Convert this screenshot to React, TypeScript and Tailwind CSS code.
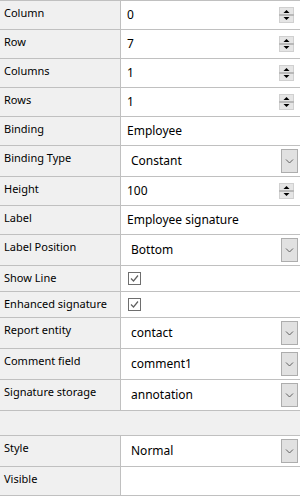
import React from 'react';

type Kind = 'spin' | 'text' | 'combo' | 'check' | 'none' | 'blank';

interface Prop {
  label: string;
  value?: string;
  kind: Kind;
  h: string;
}

const rows: Prop[] = [
  { label: 'Column', value: '0', kind: 'spin', h: 'h-[29px]' },
  { label: 'Row', value: '7', kind: 'spin', h: 'h-[29px]' },
  { label: 'Columns', value: '1', kind: 'spin', h: 'h-[29px]' },
  { label: 'Rows', value: '1', kind: 'spin', h: 'h-[29px]' },
  { label: 'Binding', value: 'Employee', kind: 'text', h: 'h-[29px]' },
  { label: 'Binding Type', value: 'Constant', kind: 'combo', h: 'h-[31px]' },
  { label: 'Height', value: '100', kind: 'spin', h: 'h-[29px]' },
  { label: 'Label', value: 'Employee signature', kind: 'text', h: 'h-[29px]' },
  { label: 'Label Position', value: 'Bottom', kind: 'combo', h: 'h-[31px]' },
  { label: 'Show Line', kind: 'check', h: 'h-[26px]' },
  { label: 'Enhanced signature', kind: 'check', h: 'h-[26px]' },
  { label: 'Report entity', value: 'contact', kind: 'combo', h: 'h-[31px]' },
  { label: 'Comment field', value: 'comment1', kind: 'combo', h: 'h-[31px]' },
  { label: 'Signature storage', value: 'annotation', kind: 'combo', h: 'h-[31px]' },
  { label: '', kind: 'blank', h: 'h-[25px]' },
  { label: 'Style', value: 'Normal', kind: 'combo', h: 'h-[31px]' },
  { label: 'Visible', kind: 'none', h: 'h-[29px]' },
];

function Spinner() {
  return (
    <svg width="15" height="16" viewBox="0 0 15 16" className="mr-[6px] shrink-0">
      <rect x="0" y="0" width="15" height="16" fill="#f0f0f0" />
      <rect x="0.5" y="0.5" width="14" height="7" fill="#e5e5e5" stroke="#d0d0d0" />
      <rect x="0.5" y="8.5" width="14" height="7" fill="#e5e5e5" stroke="#d0d0d0" />
      <line x1="0" y1="8" x2="15" y2="8" stroke="#a0a0a0" />
      <path d="M4.5 6 L10.5 6 L7.5 3 Z" fill="#000" />
      <path d="M4.5 10 L10.5 10 L7.5 13 Z" fill="#000" />
    </svg>
  );
}

function ComboButton() {
  return (
    <div className="mr-[2px] flex h-[24px] w-[17px] shrink-0 items-center justify-center border border-[#adadad] bg-[#e1e1e1]">
      <svg width="9" height="6" viewBox="0 0 9 6">
        <path d="M1 1.5 L4.5 5 L8 1.5" fill="none" stroke="#606060" strokeWidth="1" />
      </svg>
    </div>
  );
}

function CheckBox() {
  return (
    <div className="ml-[7px] flex h-[13px] w-[13px] items-center justify-center border border-[#6e6e6e] bg-white">
      <svg width="11" height="11" viewBox="0 0 11 11">
        <path d="M2 5.5 L4.5 8 L9 2.5" fill="none" stroke="#606060" strokeWidth="1.2" />
      </svg>
    </div>
  );
}

function ValueCell({ p }: { p: Prop }) {
  if (p.kind === 'spin') {
    return (
      <div className="flex flex-1 items-center bg-white">
        <span className="flex-1 pl-[6px] text-[12px] text-black">{p.value}</span>
        <Spinner />
      </div>
    );
  }
  if (p.kind === 'combo') {
    return (
      <div className="flex flex-1 items-center bg-white">
        <span className="flex-1 pl-[10px] text-[12px] text-black">{p.value}</span>
        <ComboButton />
      </div>
    );
  }
  if (p.kind === 'check') {
    return (
      <div className="flex flex-1 items-center bg-white">
        <CheckBox />
      </div>
    );
  }
  return (
    <div className="flex flex-1 items-center bg-white">
      <span className="pl-[6px] text-[12px] text-black">{p.value}</span>
    </div>
  );
}

export default function App() {
  return (
    <div className="h-[496px] w-[300px] overflow-hidden border-t border-[#c0c0c0] bg-white font-['Noto_Sans',sans-serif]">
      {rows.map((p, i) =>
        p.kind === 'blank' ? (
          <div key={i} className={`${p.h} border-b border-[#c0c0c0] bg-[#f0f0f0]`} />
        ) : (
          <div key={i} className={`flex ${p.h} border-b border-[#c0c0c0]`}>
            <div className="w-[121px] shrink-0 border-r border-[#c0c0c0] bg-[#f0f0f0] pl-[4px] pt-[4px] text-[11px] leading-[16px] text-black">
              {p.label}
            </div>
            <ValueCell p={p} />
          </div>
        )
      )}
    </div>
  );
}
